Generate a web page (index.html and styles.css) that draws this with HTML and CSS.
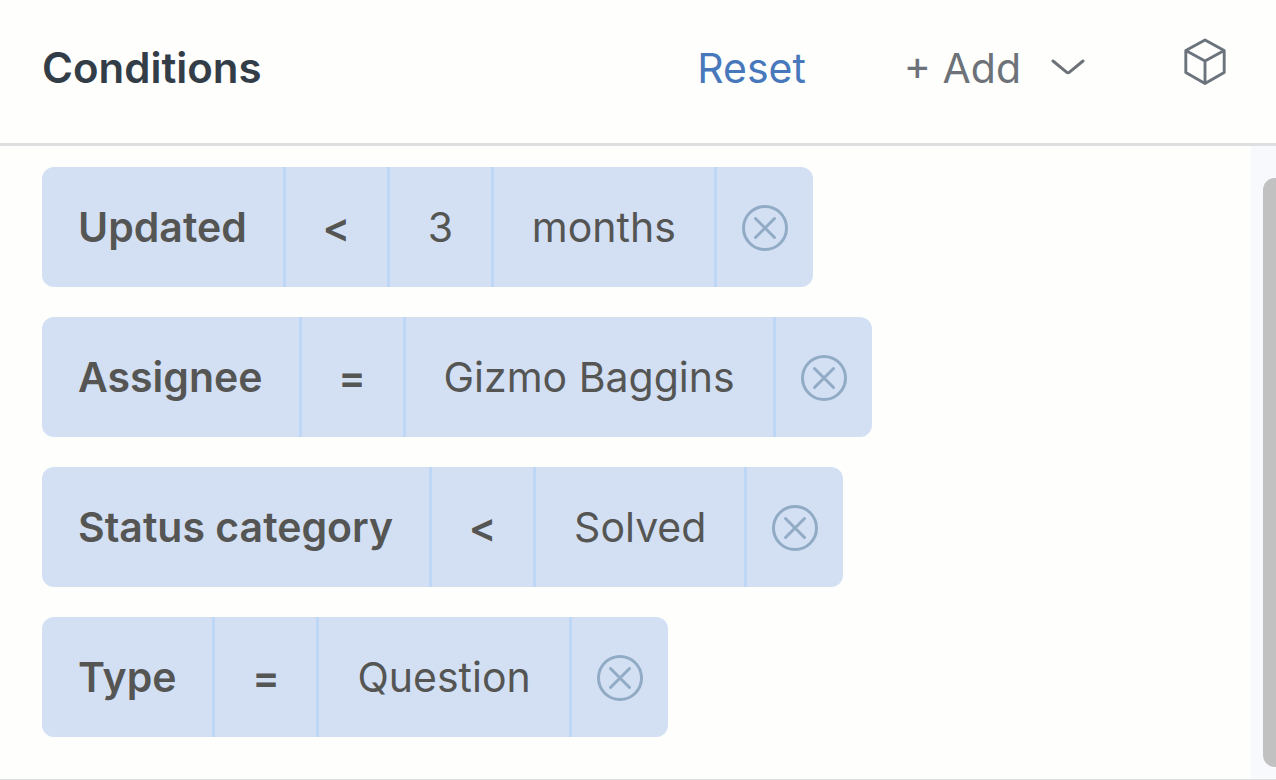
FILE: index.html
```html
<!DOCTYPE html>
<html lang="en">
<head>
<meta charset="utf-8">
<title>Conditions</title>
<link rel="stylesheet" href="styles.css">
</head>
<body>
<svg class="sprite" aria-hidden="true">
  <symbol id="remove" viewBox="0 0 46 46">
    <circle cx="23" cy="23" r="21.5"/>
    <path d="M13.500 13.500l19 19M32.500 13.500l-19 19"/>
  </symbol>
</svg>
<main class="panel">
  <header class="header">
    <h1 class="title">Conditions</h1>
    <button class="reset" type="button">Reset</button>
    <button class="add" type="button">+ Add
      <svg class="chevron" viewBox="0 0 34 18" aria-hidden="true"><path d="M2 2l13.500 11.200q1.500 1.200 3 0L32 2"/></svg>
    </button>
    <button class="cube" type="button" aria-label="Advanced">
      <svg class="cube-icon" viewBox="0 0 44 50" aria-hidden="true"><path d="M22 2L42 13V36L22 47.500L2 36V13ZM2 13L22 24L42 13M22 24V47.500"/></svg>
    </button>
  </header>
  <div class="body">
    <ul class="list">
      <li class="chip">
        <button class="cell field" type="button">Updated</button>
        <button class="cell operator" type="button">&lt;</button>
        <button class="cell number" type="button">3</button>
        <button class="cell" type="button">months</button>
        <button class="cell remove" type="button" aria-label="Remove Updated"><svg class="remove-icon"><use href="#remove"/></svg></button>
      </li>
      <li class="chip">
        <button class="cell field" type="button">Assignee</button>
        <button class="cell operator" type="button">=</button>
        <button class="cell" type="button">Gizmo Baggins</button>
        <button class="cell remove" type="button" aria-label="Remove Assignee"><svg class="remove-icon"><use href="#remove"/></svg></button>
      </li>
      <li class="chip">
        <button class="cell field" type="button">Status category</button>
        <button class="cell operator" type="button">&lt;</button>
        <button class="cell" type="button">Solved</button>
        <button class="cell remove" type="button" aria-label="Remove Status category"><svg class="remove-icon"><use href="#remove"/></svg></button>
      </li>
      <li class="chip">
        <button class="cell field" type="button">Type</button>
        <button class="cell operator" type="button">=</button>
        <button class="cell" type="button">Question</button>
        <button class="cell remove" type="button" aria-label="Remove Type"><svg class="remove-icon"><use href="#remove"/></svg></button>
      </li>
    </ul>
    <div class="track" aria-hidden="true"><div class="thumb"></div></div>
  </div>
</main>
</body>
</html>
```

FILE: styles.css
```css
* {
  box-sizing: border-box;
}

body {
  margin: 0;
  background: #fefefd;
  color: #555654;
  font-family: Inter, "Liberation Sans", sans-serif;
  font-size: 41px;
  line-height: 48px;
}

button {
  margin: 0;
  padding: 0;
  border: 0;
  background: none;
  color: inherit;
  font: inherit;
  white-space: nowrap;
  cursor: pointer;
}

svg {
  display: block;
  fill: none;
  stroke: currentColor;
  stroke-width: 3px;
  stroke-linecap: round;
  stroke-linejoin: round;
}

.sprite {
  position: absolute;
  width: 0;
  height: 0;
}

.panel {
  display: flex;
  flex-direction: column;
  min-height: 100vh;
  border-bottom: 1px solid #dedfe0;
}

.header {
  display: flex;
  align-items: center;
  padding: 38px 49px 57px 42px;
  border-bottom: 3px solid #dedfe0;
}

.title {
  flex: 1;
  margin: 0;
  padding-top: 12px;
  color: #333d47;
  font-size: 42px;
  font-weight: 600;
  line-height: 36px;
}

.reset,
.add {
  padding-top: 12px;
  line-height: 36px;
}

.reset {
  margin-right: 98px;
  color: #4878bc;
}

.add {
  display: flex;
  align-items: center;
  gap: 30px;
  margin-right: 98px;
  color: #6c7278;
}

.chevron {
  width: 34px;
  height: 18px;
}

.cube {
  color: #6b737c;
}

.cube-icon {
  width: 44px;
  height: 48px;
}

.body {
  display: flex;
  flex: 1;
}

.list {
  display: flex;
  flex: 1;
  flex-direction: column;
  align-items: flex-start;
  gap: 30px;
  margin: 0;
  padding: 21px 42px 42px;
  list-style: none;
}

.chip {
  display: flex;
  overflow: hidden;
  border-radius: 12px;
  background: #d3e0f4;
}

.cell {
  padding: 36px 38px;
  border-left: 3px solid #bed7f5;
}

.field {
  padding-right: 36px;
  padding-left: 36px;
  border-left: 0;
  font-weight: 600;
}

.operator,
.number {
  width: 104px;
  padding-right: 0;
  padding-left: 0;
}

.operator {
  font-weight: 600;
}

.remove {
  padding: 2px 25px 0;
  color: #91abc5;
}

.remove-icon {
  width: 46px;
  height: 46px;
}

.track {
  display: flex;
  width: 25px;
  padding: 32px 0 12px 12px;
  background: #f8f9fc;
}

.thumb {
  flex: 1;
  border-radius: 12px 0 0 12px;
  background: #c1c1c1;
}
```
